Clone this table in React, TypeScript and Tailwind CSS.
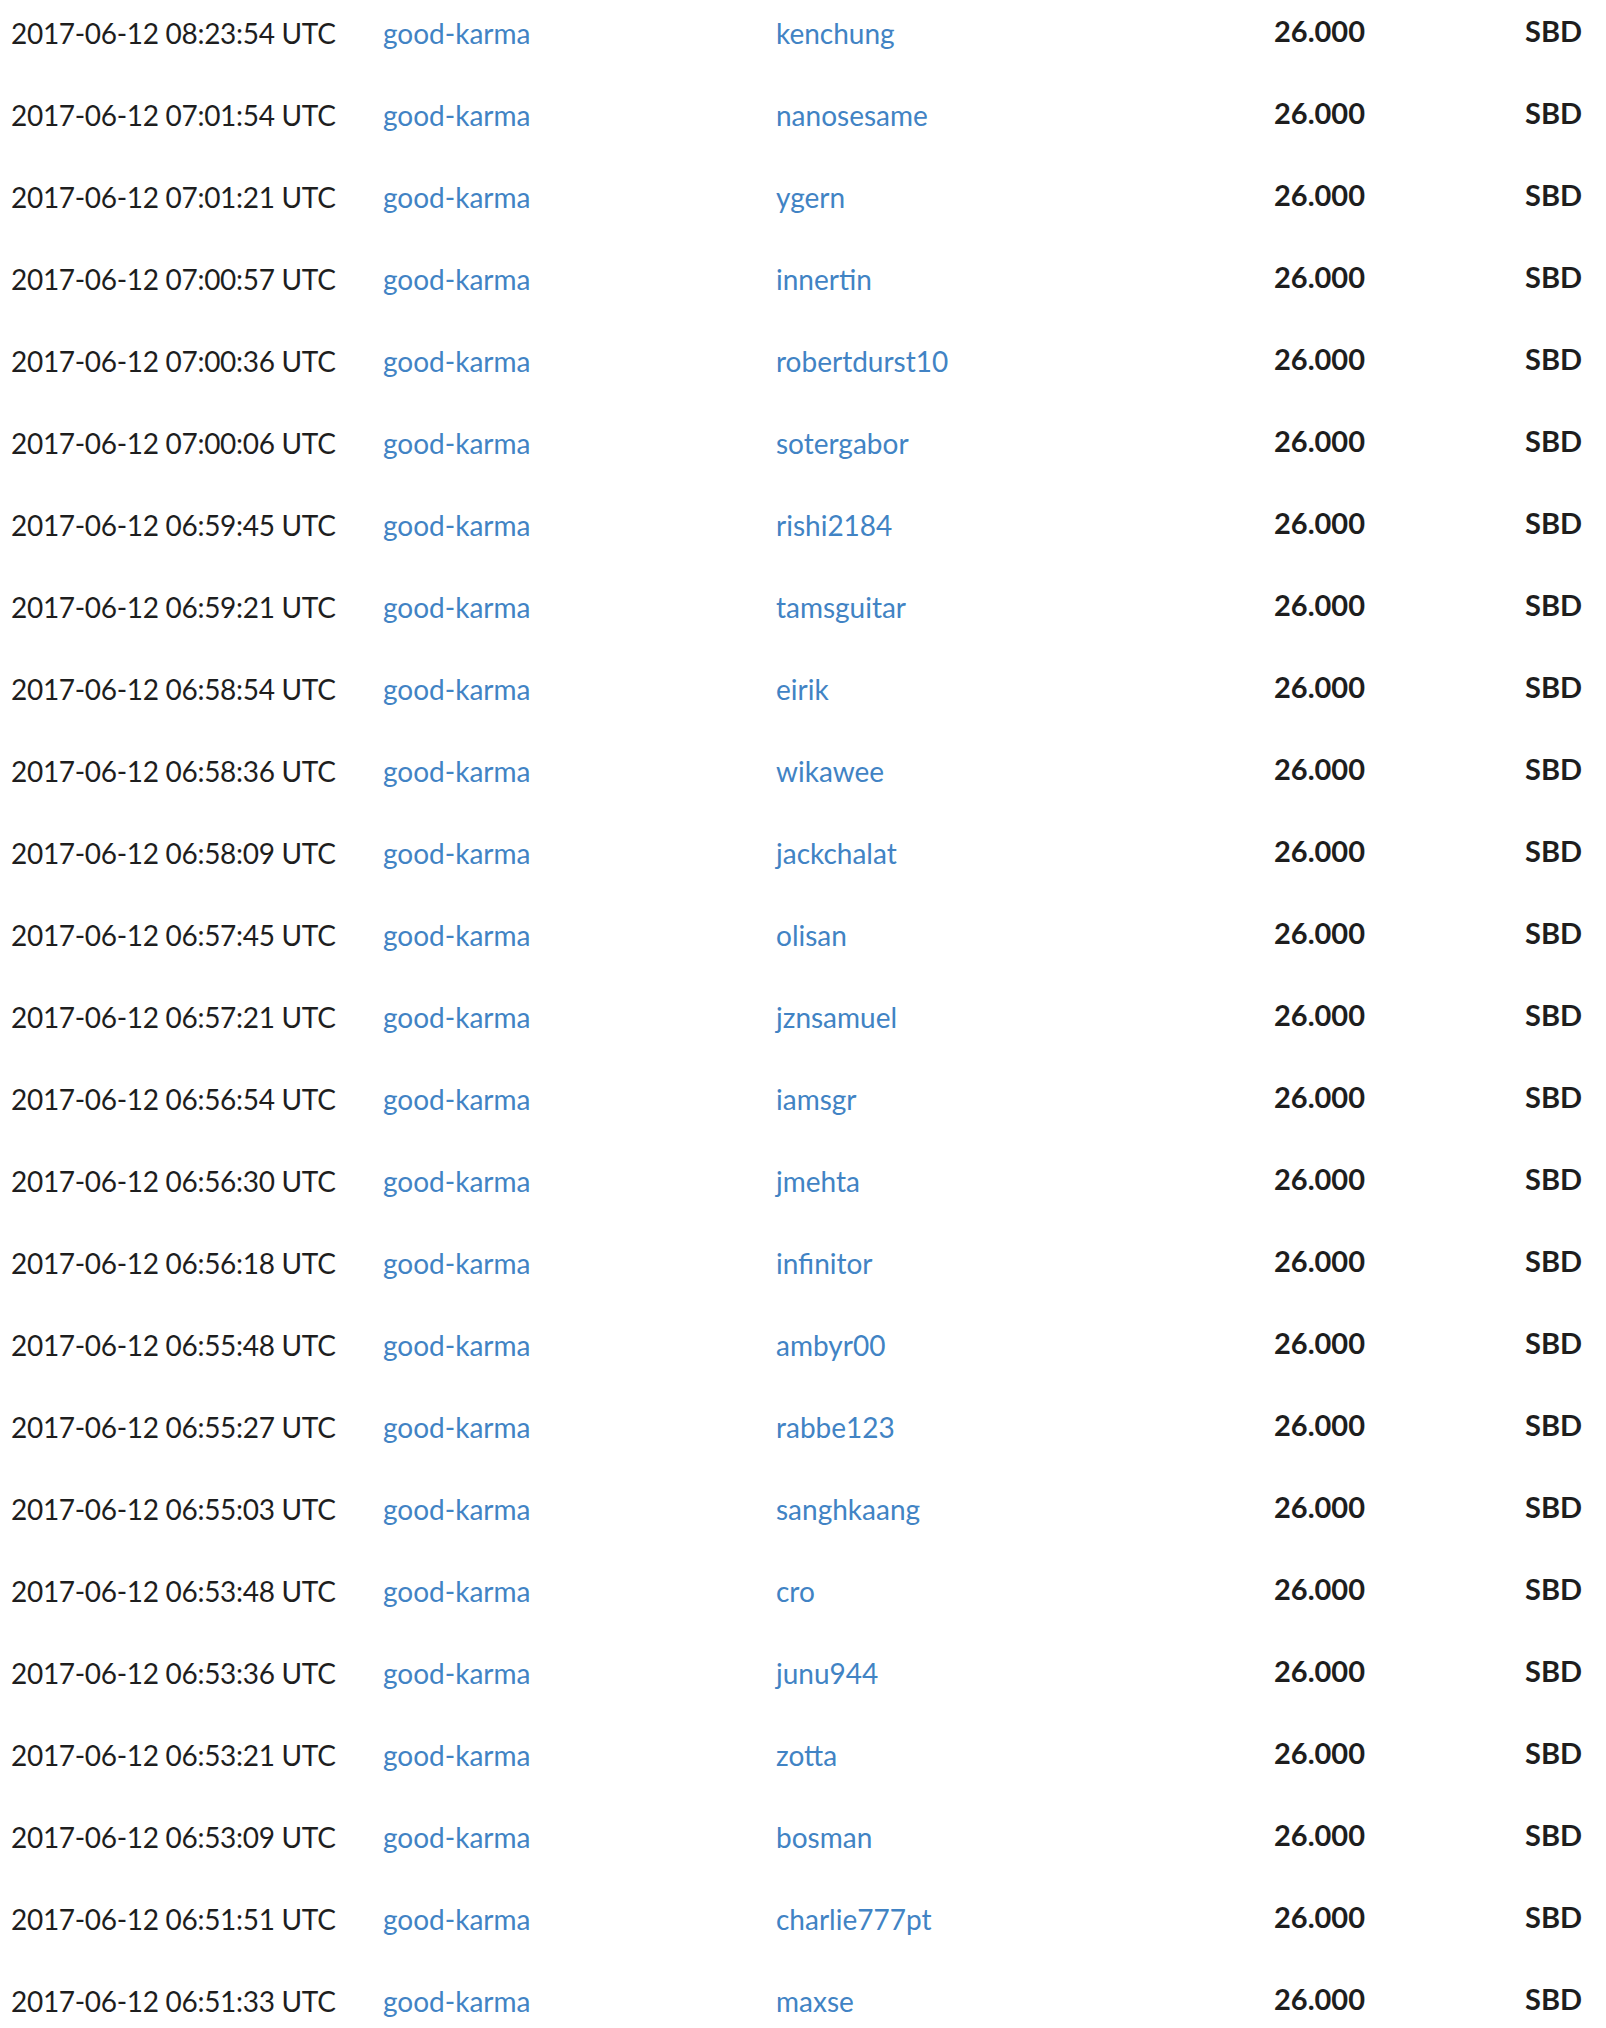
import React from "react";

const rows: [string, string][] = [
  ["08:23:54", "kenchung"],
  ["07:01:54", "nanosesame"],
  ["07:01:21", "ygern"],
  ["07:00:57", "innertin"],
  ["07:00:36", "robertdurst10"],
  ["07:00:06", "sotergabor"],
  ["06:59:45", "rishi2184"],
  ["06:59:21", "tamsguitar"],
  ["06:58:54", "eirik"],
  ["06:58:36", "wikawee"],
  ["06:58:09", "jackchalat"],
  ["06:57:45", "olisan"],
  ["06:57:21", "jznsamuel"],
  ["06:56:54", "iamsgr"],
  ["06:56:30", "jmehta"],
  ["06:56:18", "infinitor"],
  ["06:55:48", "ambyr00"],
  ["06:55:27", "rabbe123"],
  ["06:55:03", "sanghkaang"],
  ["06:53:48", "cro"],
  ["06:53:36", "junu944"],
  ["06:53:21", "zotta"],
  ["06:53:09", "bosman"],
  ["06:51:51", "charlie777pt"],
  ["06:51:33", "maxse"],
];

export default function App() {
  return (
    <div className="bg-white w-[1606px] font-['Lato',sans-serif] text-[#1e1e1e]">
      {rows.map(([t, name]) => (
        <div key={t} className="flex items-start h-[82px] pt-[16px] pl-[11px] text-[28px] leading-[34px] whitespace-nowrap">
          <div className="w-[372px] tracking-[-0.3px]">2017-06-12 {t} UTC</div>
          <div className="w-[393px]">
            <a className="text-[#4183c4]">good-karma</a>
          </div>
          <div className="w-[498px]">
            <a className="text-[#4183c4]">{name}</a>
          </div>
          <div className="w-[251px] font-bold text-[29px] mt-[-2px]">26.000</div>
          <div className="font-bold text-[29px] mt-[-2px]">SBD</div>
        </div>
      ))}
    </div>
  );
}
